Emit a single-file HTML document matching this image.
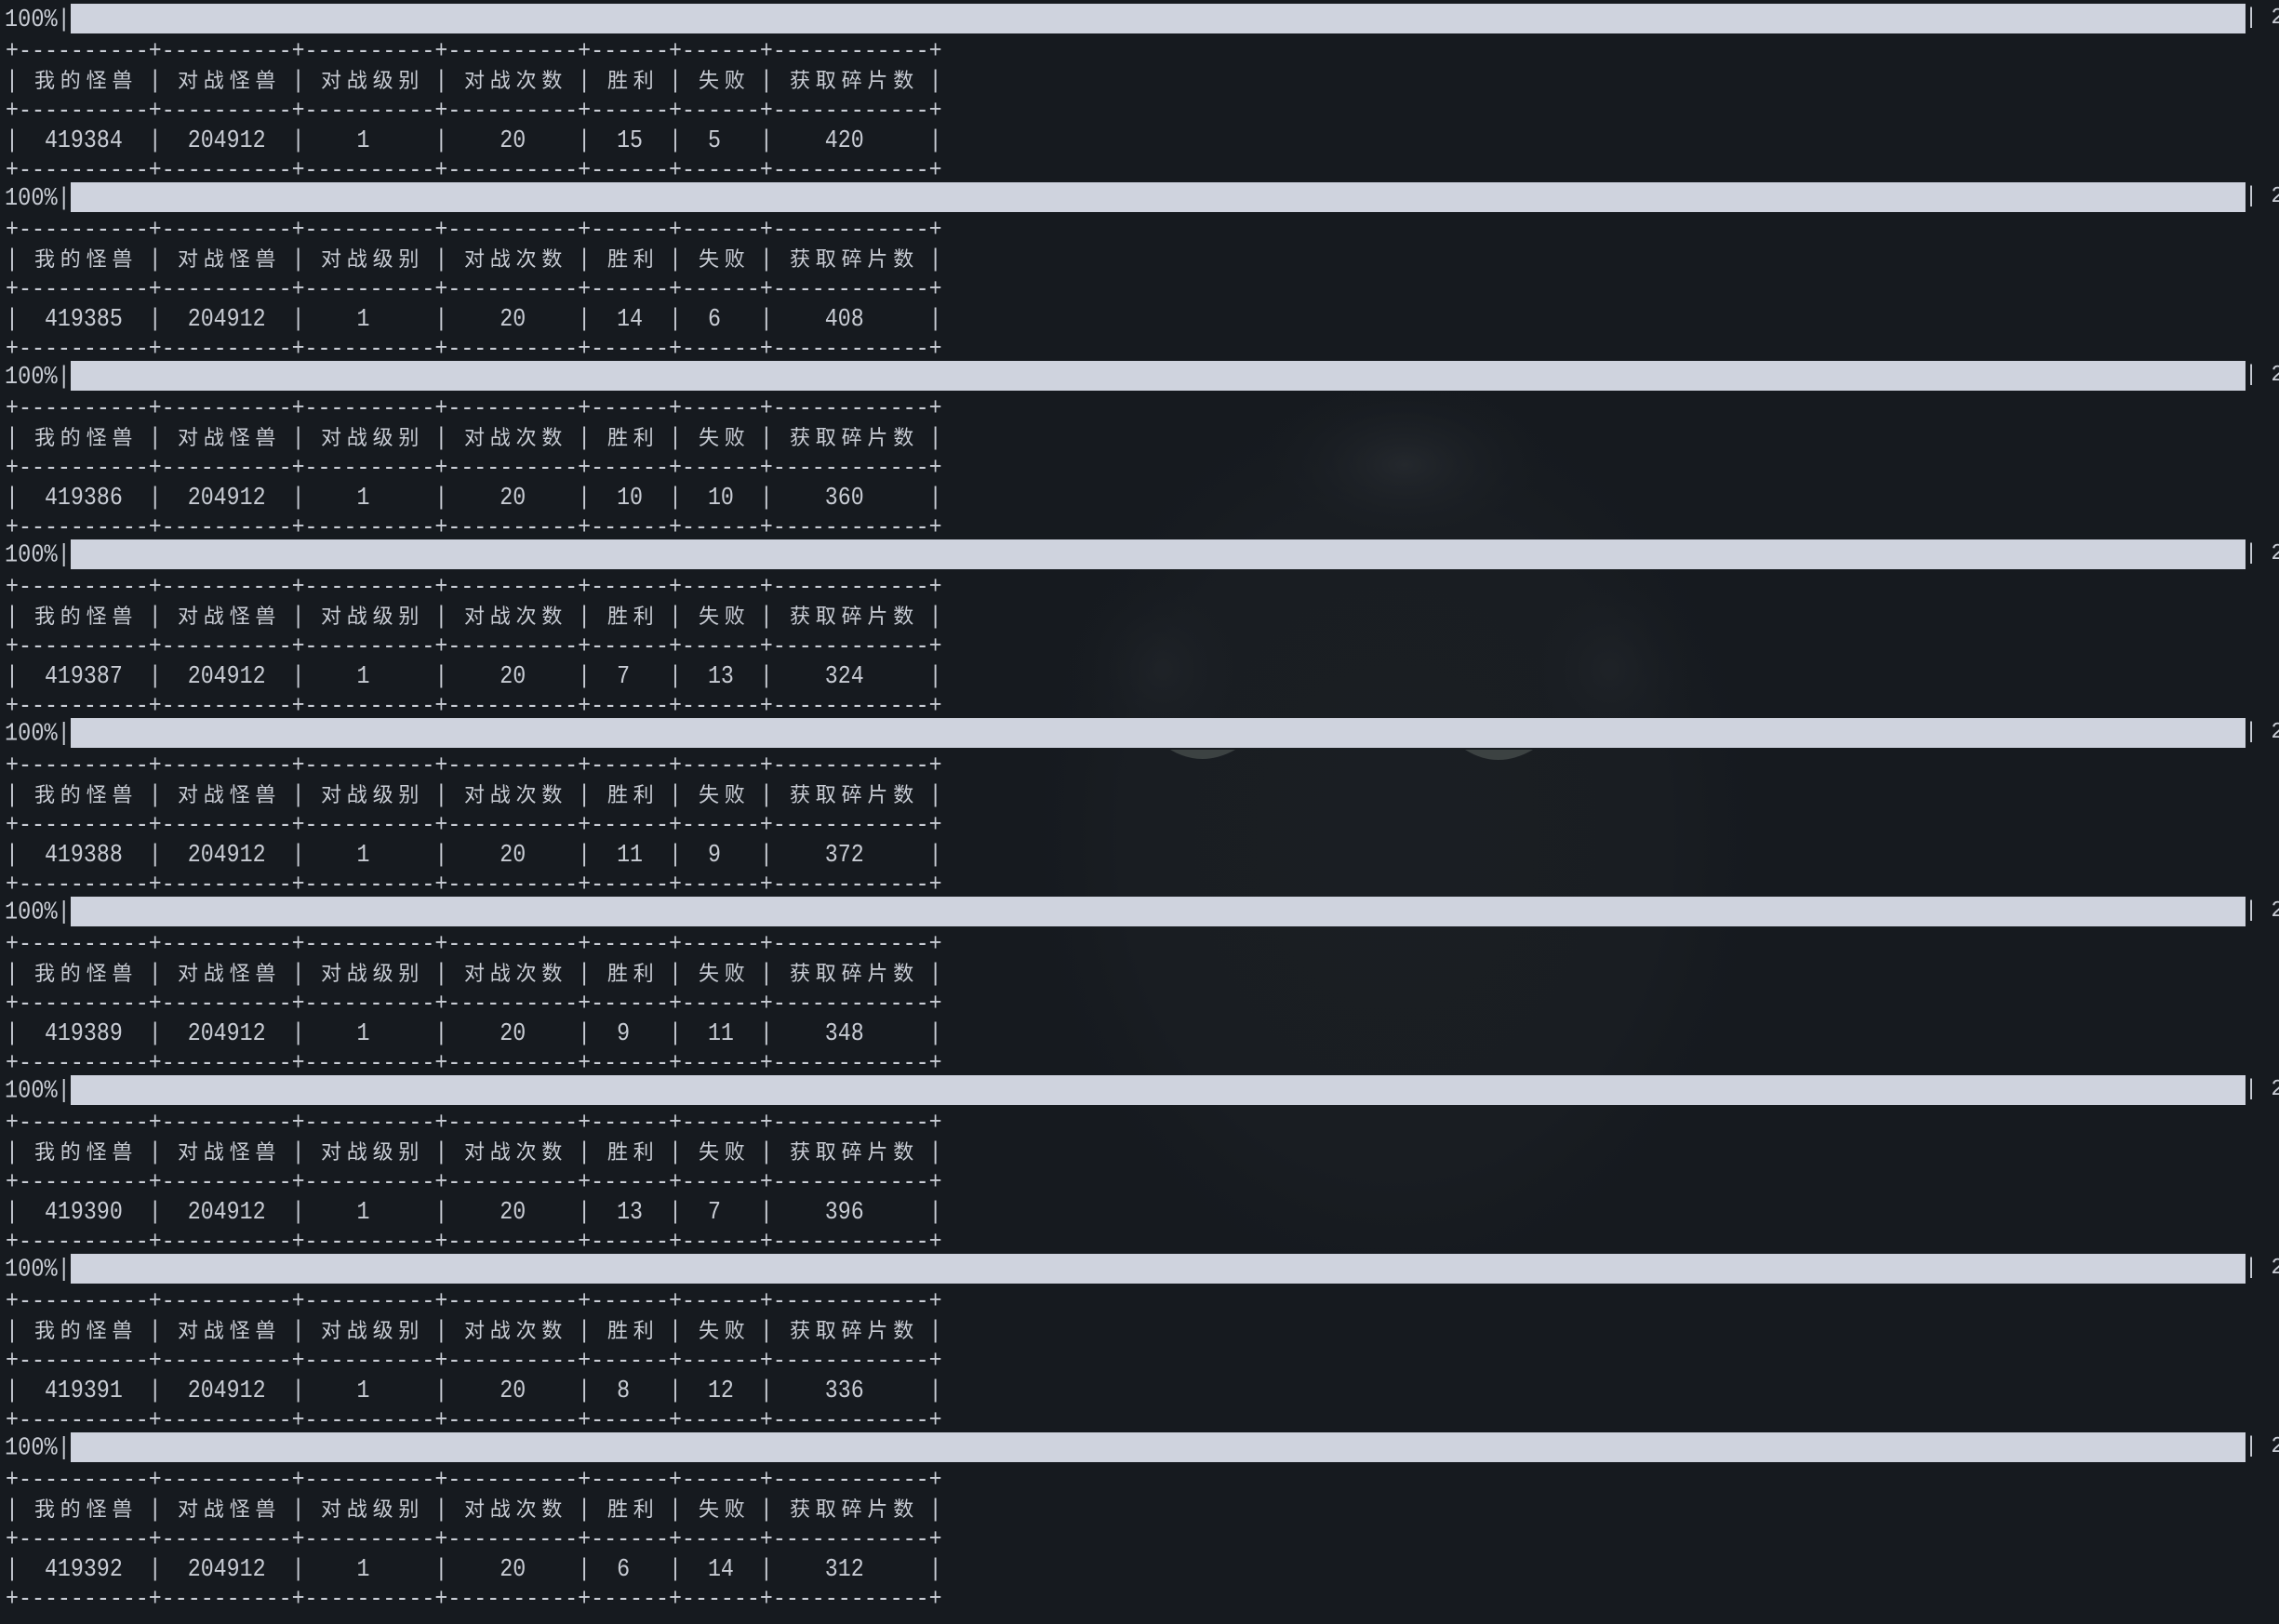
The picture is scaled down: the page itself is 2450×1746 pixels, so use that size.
<!DOCTYPE html>
<html><head><meta charset="utf-8"><style>
html,body{margin:0;padding:0;background:#161a1f;width:2450px;height:1746px;overflow:hidden;position:relative}
.bg{position:absolute;left:0;top:0;width:2450px;height:1746px}
.l{position:absolute;left:6px;height:32px;line-height:32px;font-family:"Liberation Mono",monospace;font-size:23.3px;color:#c8ccd4;white-space:pre;transform:scaleY(1.15);transform-origin:0 50%}
.p{position:absolute;left:5px;height:32px;line-height:32px;font-family:"Liberation Mono",monospace;font-size:23.6px;color:#c8ccd4;white-space:pre;transform:scaleY(1.15);transform-origin:0 50%}
.bar{position:absolute;left:76px;width:2338px;height:32px;background:#cfd3de}
.r{position:absolute;left:2413px;height:32px;line-height:32px;font-family:"Liberation Mono",monospace;font-size:23.6px;color:#c8ccd4;white-space:pre}
.h{position:absolute;height:32px;line-height:32px;font-family:"Liberation Sans","Noto Sans CJK SC",sans-serif;font-size:22px;letter-spacing:5.8px;color:#c8ccd4;white-space:pre;padding-left:3px}
</style></head><body>
<svg class="bg" width="2450" height="1746" viewBox="0 0 2450 1746">
<defs>
<radialGradient id="hd" cx="0.5" cy="0.5" r="0.5"><stop offset="0" stop-color="#1a1e23"/><stop offset="0.7" stop-color="#191d22"/><stop offset="1" stop-color="#161a1f" stop-opacity="0"/></radialGradient>
<radialGradient id="fur" cx="0.5" cy="0.5" r="0.5"><stop offset="0" stop-color="#24282d"/><stop offset="1" stop-color="#161a1f" stop-opacity="0"/></radialGradient>
</defs>
<ellipse cx="1500" cy="900" rx="420" ry="520" fill="url(#hd)"/>
<ellipse cx="1510" cy="500" rx="170" ry="100" fill="url(#fur)"/>
<ellipse cx="1250" cy="720" rx="110" ry="120" fill="url(#fur)" opacity="0.5"/>
<ellipse cx="1730" cy="720" rx="110" ry="120" fill="url(#fur)" opacity="0.5"/>
<path d="M1258 806 Q1292 826 1328 806 Z" fill="#3c4242"/>
<path d="M1575 806 Q1610 828 1648 806 Z" fill="#3c4242"/>
</svg>
<div id="c"></div>
<script>
var data=[[419384,15,5,420],[419385,14,6,408],[419386,10,10,360],[419387,7,13,324],[419388,11,9,372],[419389,9,11,348],[419390,13,7,396],[419391,8,12,336],[419392,6,14,312]];
function cen(s,w){s=String(s);var t=w-s.length,l=Math.floor(t/2);return " ".repeat(l)+s+" ".repeat(t-l);}
var B="+----------+----------+----------+----------+------+------+------------+";
var P="|          |          |          |          |      |      |            |";
var H=[["我的怪兽",2],["对战怪兽",13],["对战级别",24],["对战次数",35],["胜利",46],["失败",53],["获取碎片数",60]];
var cw=14.0;
var h="";
data.forEach(function(d,i){
 var t=4+i*192;
 h+='<div class="bar" style="top:'+t+'px"></div>';
 h+='<div class="p" style="top:'+(t+2)+'px">100%|</div>';
 h+='<div class="r" style="top:'+t+'px">| 2</div>';
 var y=t+35;
 h+='<div class="l" style="top:'+y+'px">'+B+'</div>';
 h+='<div class="l" style="top:'+(y+32)+'px">'+P+'</div>';
 H.forEach(function(x){h+='<div class="h" style="top:'+(y+32)+'px;left:'+(6+x[1]*cw)+'px">'+x[0]+'</div>';});
 h+='<div class="l" style="top:'+(y+64)+'px">'+B+'</div>';
 var row="|"+cen(d[0],10)+"|"+cen(204912,10)+"|"+cen(1,10)+"|"+cen(20,10)+"|"+cen(d[1],6)+"|"+cen(d[2],6)+"|"+cen(d[3],12)+"|";
 h+='<div class="l" style="top:'+(y+96)+'px">'+row+'</div>';
 h+='<div class="l" style="top:'+(y+128)+'px">'+B+'</div>';
});
document.getElementById("c").innerHTML=h;
</script>
</body></html>
